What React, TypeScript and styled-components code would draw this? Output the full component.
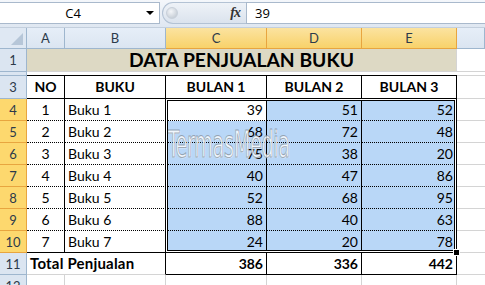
import React from 'react';
import styled, { createGlobalStyle, css } from 'styled-components';

const GlobalStyle = createGlobalStyle`
  html, body {
    margin: 0;
    padding: 0;
    background: #ffffff;
    overflow: hidden;
  }
  body {
    font-family: Lato, 'Liberation Sans', sans-serif;
    color: #000;
  }
`;

const GRID = '1px solid #d4d4d4';
const SOLID = '1px solid #000';
const DOT = '1px dotted #000';
const HEAD_BORDER = '#9eb6ce';
const SEL_BORDER = '#e8a53f';
const SEL_FILL = '#b9d7f7';

const Window = styled.div`
  width: 485px;
  height: 285px;
  overflow: hidden;
`;

// ---------- formula bar ----------
const FormulaBar = styled.div`
  display: flex;
  align-items: center;
  height: 28px;
  box-sizing: border-box;
  padding: 2px 0 3px 0;
  background: linear-gradient(#f4f7fb, #dfe7f1);
  border-bottom: 1px solid #c3cfdd;
`;

const NameBox = styled.div`
  display: flex;
  align-items: center;
  width: 160px;
  height: 22px;
  box-sizing: border-box;
  background: #fff;
  border: 1px solid #a9b9cc;
  border-left: none;
  font-family: 'Open Sans', 'Liberation Sans', sans-serif;
  font-size: 13px;
`;

const NameText = styled.span`
  flex: 1;
  text-align: center;
`;

const DropArrow = styled.span`
  width: 0;
  height: 0;
  margin-right: 5px;
  border-left: 4px solid transparent;
  border-right: 4px solid transparent;
  border-top: 4px solid #000;
`;

const Grip = styled.div`
  display: flex;
  align-items: center;
  justify-content: space-between;
  width: 84px;
  height: 22px;
  margin-left: 2px;
  box-sizing: border-box;
  border: 1px solid #b3c2d4;
  border-right: none;
  border-radius: 11px 0 0 11px;
  background: linear-gradient(#eef2f7, #dbe3ed);
  padding: 0 6px 0 3px;
`;

const GripDot = styled.span`
  width: 10px;
  height: 10px;
  border-radius: 50%;
  background: radial-gradient(circle at 40% 35%, #f4f6f9, #b9c2cc);
  border: 1px solid #c8d0da;
`;

const Fx = styled.span`
  font-family: 'Liberation Serif', serif;
  font-style: italic;
  font-weight: bold;
  font-size: 14px;
  color: #333;
  letter-spacing: -1px;
`;

const FormulaInput = styled.div`
  flex: 1;
  height: 22px;
  box-sizing: border-box;
  background: #fff;
  border: 1px solid #a9b9cc;
  border-right: none;
  display: flex;
  align-items: center;
  padding-left: 8px;
  font-family: 'Open Sans', 'Liberation Sans', sans-serif;
  font-size: 13px;
`;

// ---------- sheet ----------
const Sheet = styled.div`
  display: grid;
  grid-template-columns: 27px 38px 101px 101px 95px 95px 1fr;
  grid-template-rows: 21px 23px 4px 23px repeat(7, 22px) 22px 22px;
`;

type Place = { $row: number; $col: number; $span?: number };

const placed = css<Place>`
  grid-row: ${p => p.$row};
  grid-column: ${p => (p.$span ? `${p.$col} / span ${p.$span}` : p.$col)};
`;

const Corner = styled.div<Place>`
  ${placed};
  position: relative;
  box-sizing: border-box;
  background: #dfe8f3;
  border-right: 1px solid ${HEAD_BORDER};
  border-bottom: 1px solid ${HEAD_BORDER};
  &::after {
    content: '';
    position: absolute;
    right: 3px;
    bottom: 3px;
    width: 0;
    height: 0;
    border-left: 12px solid transparent;
    border-bottom: 12px solid #b6c6d8;
  }
`;

const ColHead = styled.div<Place & { $sel?: boolean }>`
  ${placed};
  display: flex;
  align-items: center;
  justify-content: center;
  box-sizing: border-box;
  font-size: 13px;
  color: #2c3a4a;
  background: ${p => (p.$sel ? 'linear-gradient(#fbe3a0, #f8d26a)' : 'linear-gradient(#e6eef8, #dbe5f1)')};
  border-right: 1px solid ${p => (p.$sel ? SEL_BORDER : HEAD_BORDER)};
  border-bottom: 1px solid ${p => (p.$sel ? SEL_BORDER : HEAD_BORDER)};
`;

const RowHead = styled.div<Place & { $sel?: boolean }>`
  ${placed};
  display: flex;
  align-items: center;
  justify-content: center;
  box-sizing: border-box;
  font-size: 13px;
  color: #2c3a4a;
  background: ${p => (p.$sel ? '#fdd86e' : '#dbe5f1')};
  border-right: 1px solid ${p => (p.$sel ? SEL_BORDER : HEAD_BORDER)};
  border-bottom: 1px solid ${p => (p.$sel ? SEL_BORDER : HEAD_BORDER)};
`;

type CellProps = Place & {
  $align?: 'left' | 'center' | 'right';
  $bold?: boolean;
  $bg?: string;
  $rb?: string;
  $bb?: string;
};

const Cell = styled.div<CellProps>`
  ${placed};
  display: flex;
  align-items: center;
  justify-content: ${p => (p.$align === 'right' ? 'flex-end' : p.$align === 'center' ? 'center' : 'flex-start')};
  box-sizing: border-box;
  padding: 0 3px 1px 3px;
  font-size: 14px;
  font-weight: ${p => (p.$bold ? 700 : 400)};
  background: ${p => p.$bg || 'transparent'};
  border-right: ${p => p.$rb || GRID};
  border-bottom: ${p => p.$bb || GRID};
  white-space: nowrap;
  overflow: hidden;
`;

const Title = styled(Cell)`
  font-size: 19.3px;
  font-weight: 700;
`;

const TotalLabel = styled(Cell)`
  font-size: 15px;
  letter-spacing: 0.2px;
`;

const Selection = styled.div`
  grid-row: 5 / 12;
  grid-column: 4 / 7;
  margin: -1px 0 0 -1px;
  position: relative;
  z-index: 2;
  pointer-events: none;
  border: 1px solid #000;
  box-shadow: inset 0 0 0 1px #fff, inset 0 0 0 2px #000;
`;

const FillHandle = styled.span`
  position: absolute;
  right: -4px;
  bottom: -4px;
  width: 5px;
  height: 5px;
  background: #000;
  border: 1px solid #fff;
`;

const Watermark = styled.div`
  grid-row: 6 / 8;
  grid-column: 4 / 6;
  z-index: 1;
  display: flex;
  align-items: center;
  padding: 2px 0 0 3px;
  pointer-events: none;
  font-family: 'DejaVu Sans Condensed', 'DejaVu Sans', sans-serif;
  font-size: 38px;
  letter-spacing: -0.5px;
  color: rgba(255, 255, 255, 0.6);
  -webkit-text-stroke: 1px rgba(110, 120, 130, 0.6);
  text-shadow: 1px 1px 0 rgba(255, 255, 255, 0.5);
  transform: scaleX(0.56);
  transform-origin: left center;
`;

const rows = [
  [1, 'Buku 1', 39, 51, 52],
  [2, 'Buku 2', 68, 72, 48],
  [3, 'Buku 3', 75, 38, 20],
  [4, 'Buku 4', 40, 47, 86],
  [5, 'Buku 5', 52, 68, 95],
  [6, 'Buku 6', 88, 40, 63],
  [7, 'Buku 7', 24, 20, 78],
] as const;

const totals = [386, 336, 442];
const headers = ['NO', 'BUKU', 'BULAN 1', 'BULAN 2', 'BULAN 3'];
const letters = ['A', 'B', 'C', 'D', 'E'];

const App = () => {
  return (
    <Window>
      <GlobalStyle />
      <FormulaBar>
        <NameBox>
          <NameText>C4</NameText>
          <DropArrow />
        </NameBox>
        <Grip>
          <GripDot />
          <Fx>fx</Fx>
        </Grip>
        <FormulaInput>39</FormulaInput>
      </FormulaBar>

      <Sheet>
        {/* column headers */}
        <Corner $row={1} $col={1} />
        {letters.map((l, i) => (
          <ColHead key={l} $row={1} $col={i + 2} $sel={i >= 2}>
            {l}
          </ColHead>
        ))}
        <ColHead $row={1} $col={7} />

        {/* row 1: title */}
        <RowHead $row={2} $col={1}>1</RowHead>
        <Title $row={2} $col={2} $span={5} $align="center" $bg="#ddd9c4">
          DATA PENJUALAN BUKU
        </Title>
        <Cell $row={2} $col={7} $rb="none" />

        {/* row 2: hidden */}
        <RowHead $row={3} $col={1} />
        {letters.map((l, i) => (
          <Cell key={l} $row={3} $col={i + 2} $bb={SOLID} $rb="none" />
        ))}
        <Cell $row={3} $col={7} $rb="none" />

        {/* row 3: table header */}
        <RowHead $row={4} $col={1}>3</RowHead>
        {headers.map((h, i) => (
          <Cell key={h} $row={4} $col={i + 2} $align="center" $bold $rb={SOLID} $bb={SOLID}>
            {h}
          </Cell>
        ))}
        <Cell $row={4} $col={7} $rb="none" />

        {/* rows 4-10: data */}
        {rows.map((r, ri) => {
          const row = ri + 5;
          const bb = ri === rows.length - 1 ? SOLID : DOT;
          return (
            <React.Fragment key={row}>
              <RowHead $row={row} $col={1} $sel>
                {ri + 4}
              </RowHead>
              <Cell $row={row} $col={2} $align="center" $rb={SOLID} $bb={bb}>
                {r[0]}
              </Cell>
              <Cell $row={row} $col={3} $rb={SOLID} $bb={bb}>
                {r[1]}
              </Cell>
              {[r[2], r[3], r[4]].map((v, vi) => (
                <Cell
                  key={vi}
                  $row={row}
                  $col={vi + 4}
                  $align="right"
                  $rb={SOLID}
                  $bb={bb}
                  $bg={ri === 0 && vi === 0 ? '#fff' : SEL_FILL}
                >
                  {v}
                </Cell>
              ))}
              <Cell $row={row} $col={7} $rb="none" />
            </React.Fragment>
          );
        })}

        {/* row 11: totals */}
        <RowHead $row={12} $col={1}>11</RowHead>
        <TotalLabel $row={12} $col={2} $span={2} $bold $rb={SOLID}>
          Total Penjualan
        </TotalLabel>
        {totals.map((t, i) => (
          <Cell key={t} $row={12} $col={i + 4} $align="right" $bold $rb={SOLID} $bb={SOLID}>
            {t}
          </Cell>
        ))}
        <Cell $row={12} $col={7} $rb="none" />

        {/* row 12 */}
        <RowHead $row={13} $col={1}>12</RowHead>
        {letters.map((l, i) => (
          <Cell key={l} $row={13} $col={i + 2} />
        ))}
        <Cell $row={13} $col={7} $rb="none" />

        <Selection>
          <FillHandle />
        </Selection>
        <Watermark>TermasMedia</Watermark>
      </Sheet>
    </Window>
  );
};

export default App;
